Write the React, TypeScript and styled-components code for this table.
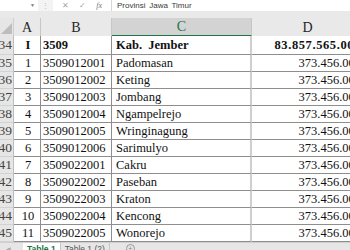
import * as React from 'react'
import styled, { createGlobalStyle } from 'styled-components'

const GlobalStyle = createGlobalStyle`
html, body {
    margin: 0;
    padding: 0;
    background: #e9e9e9;
    overflow: hidden;
}
`

const COLS = '14px 27px 71px 140px 112px'
const GREEN = '#217346'
const SERIF = '"Liberation Serif", "Times New Roman", serif'

const Window = styled.div`
width: 350px;
height: 250px;
overflow: hidden;
display: flex;
flex-direction: column;
background: #e9e9e9;
`

const FormulaBar = styled.div`
height: 11px;
flex: none;
display: flex;
background: #f3f3f3;
`

const NameBox = styled.div`
width: 38px;
background: #fff;
display: flex;
align-items: center;
justify-content: flex-end;
padding-right: 3px;
box-sizing: border-box;
color: #777;
font-size: 5px;
`

const Grip = styled.div`
width: 15px;
display: flex;
align-items: center;
justify-content: center;
color: #b9b9b9;
font: 7px "Liberation Sans", sans-serif;
`

const FxBox = styled.div`
width: 58px;
background: #fff;
display: flex;
align-items: center;
justify-content: space-around;
padding: 0 4px;
box-sizing: border-box;
color: #a6a6a6;
font: 8px "Liberation Sans", sans-serif;
`

const FxLabel = styled.span`
font: italic 8px ${SERIF};
color: #777;
`

const FormulaInput = styled.div`
flex: 1;
background: #fff;
border-left: 1px solid #d6d6d6;
padding-left: 5px;
font: 8px "Liberation Sans", Arial, sans-serif;
line-height: 11px;
color: #3a3a3a;
word-spacing: 1.5px;
`

const Gap = styled.div`
height: 7px;
flex: none;
`

const Grid = styled.div`
display: flex;
flex-direction: column;
flex: none;
`

const Row = styled.div<{ $h: number }>`
display: grid;
grid-template-columns: ${COLS};
height: ${p => p.$h}px;
width: 364px;
`

const Corner = styled.div`
background: #e6e6e6;
border-right: 1px solid #cfcfcf;
border-bottom: 1px solid #bdbdbd;
display: flex;
align-items: flex-end;
justify-content: flex-end;
padding: 0 1px 2px 0;
`

const ColHeader = styled.div<{ $selected?: boolean }>`
display: flex;
align-items: center;
justify-content: center;
font: 14px ${SERIF};
color: ${p => p.$selected ? GREEN : '#262626'};
background: ${p => p.$selected ? '#d3d3d3' : '#e9e9e9'};
border-right: 1px solid #c6c6c6;
border-bottom: ${p => p.$selected ? `2px solid ${GREEN}` : '1px solid #b5b5b5'};
box-sizing: border-box;
padding-top: 1px;
`

const RowHeader = styled.div`
display: flex;
align-items: center;
justify-content: flex-end;
overflow: hidden;
white-space: nowrap;
background: #e6e6e6;
border-right: 1px solid #bdbdbd;
border-bottom: 1px solid #d2d2d2;
box-sizing: border-box;
font: 13.5px ${SERIF};
color: #444;
padding-right: 1px;
`

const Cell = styled.div<{ $align?: 'left' | 'center' | 'right'; $bold?: boolean; $lightRight?: boolean; $pad?: number; $track?: number }>`
display: flex;
align-items: center;
justify-content: ${p => p.$align === 'center' ? 'center' : p.$align === 'right' ? 'flex-end' : 'flex-start'};
overflow: hidden;
white-space: pre;
background: #fff;
box-sizing: border-box;
border-bottom: 1px solid #8e8e8e;
border-right: ${p => p.$lightRight ? '2px solid #cfcfcf' : '1px solid #8e8e8e'};
padding: 1px ${p => p.$align === 'right' ? 2 : 0}px 0 ${p => p.$pad ?? 2}px;
font: ${p => p.$bold ? 'bold' : 'normal'} 12.5px ${SERIF};
letter-spacing: ${p => p.$track ?? 0}px;
color: #111;
`

const TabBar = styled.div`
height: 20px;
flex: none;
display: flex;
align-items: stretch;
background: #e6e6e6;
border-top: 1px solid #cfcfcf;
font: 8.5px "Liberation Sans", Arial, sans-serif;
`

const TabNav = styled.div`
width: 23px;
color: #aaa;
font-size: 6px;
padding: 2px 0 0 6px;
box-sizing: border-box;
`

const Tab = styled.div<{ $active?: boolean }>`
padding: 1px 4px 0;
background: ${p => p.$active ? '#fff' : 'transparent'};
color: ${p => p.$active ? GREEN : '#555'};
font-weight: ${p => p.$active ? 'bold' : 'normal'};
border-right: 1px solid #c4c4c4;
`

const AddSheet = styled.div`
margin-left: 16px;
width: 7px;
height: 7px;
border: 1px solid #999;
border-radius: 50%;
margin-top: 1px;
display: flex;
align-items: center;
justify-content: center;
color: #888;
font-size: 7px;
line-height: 7px;
`

type DataRow = { n: number; a: string; b: string; c: string; d: string; bold?: boolean }

const rows: DataRow[] = [
    { n: 34, a: 'I', b: '3509', c: 'Kab.  Jember', d: '83.857.565.000', bold: true },
    { n: 35, a: '1', b: '3509012001', c: 'Padomasan', d: '373.456.000' },
    { n: 36, a: '2', b: '3509012002', c: 'Keting', d: '373.456.000' },
    { n: 37, a: '3', b: '3509012003', c: 'Jombang', d: '373.456.000' },
    { n: 38, a: '4', b: '3509012004', c: 'Ngampelrejo', d: '373.456.000' },
    { n: 39, a: '5', b: '3509012005', c: 'Wringinagung', d: '373.456.000' },
    { n: 40, a: '6', b: '3509012006', c: 'Sarimulyo', d: '373.456.000' },
    { n: 41, a: '7', b: '3509022001', c: 'Cakru', d: '373.456.000' },
    { n: 42, a: '8', b: '3509022002', c: 'Paseban', d: '373.456.000' },
    { n: 43, a: '9', b: '3509022003', c: 'Kraton', d: '373.456.000' },
    { n: 44, a: '10', b: '3509022004', c: 'Kencong', d: '373.456.000' },
    { n: 45, a: '11', b: '3509022005', c: 'Wonorejo', d: '373.456.000' },
]

export default function App() {
    return <Window>
        <GlobalStyle />
        <FormulaBar>
            <NameBox>▼</NameBox>
            <Grip>⋮</Grip>
            <FxBox>
                <span>✕</span>
                <span>✓</span>
                <FxLabel>fx</FxLabel>
            </FxBox>
            <FormulaInput>Provinsi Jawa Timur</FormulaInput>
        </FormulaBar>
        <Gap />
        <Grid>
            <Row $h={18}>
                <Corner>
                    <svg width="11" height="11" viewBox="0 0 11 11">
                        <path d="M11 0 L11 11 L0 11 Z" fill="#bdbdbd" />
                    </svg>
                </Corner>
                <ColHeader>A</ColHeader>
                <ColHeader>B</ColHeader>
                <ColHeader $selected>C</ColHeader>
                <ColHeader>D</ColHeader>
            </Row>
            {rows.map((r, i) =>
                <Row key={r.n} $h={i === 0 ? 19 : 17}>
                    <RowHeader>{r.n}</RowHeader>
                    <Cell $align="center" $bold={r.bold}>{r.a}</Cell>
                    <Cell $bold={r.bold}>{r.b}</Cell>
                    <Cell $bold={r.bold} $lightRight $pad={4}>{r.c}</Cell>
                    <Cell $align="right" $bold={r.bold} $track={r.bold ? 0.6 : 0}>{r.d}</Cell>
                </Row>
            )}
        </Grid>
        <TabBar>
            <TabNav>◀</TabNav>
            <Tab $active>Table 1</Tab>
            <Tab>Table 1 (2)</Tab>
            <AddSheet>+</AddSheet>
        </TabBar>
    </Window>
}
